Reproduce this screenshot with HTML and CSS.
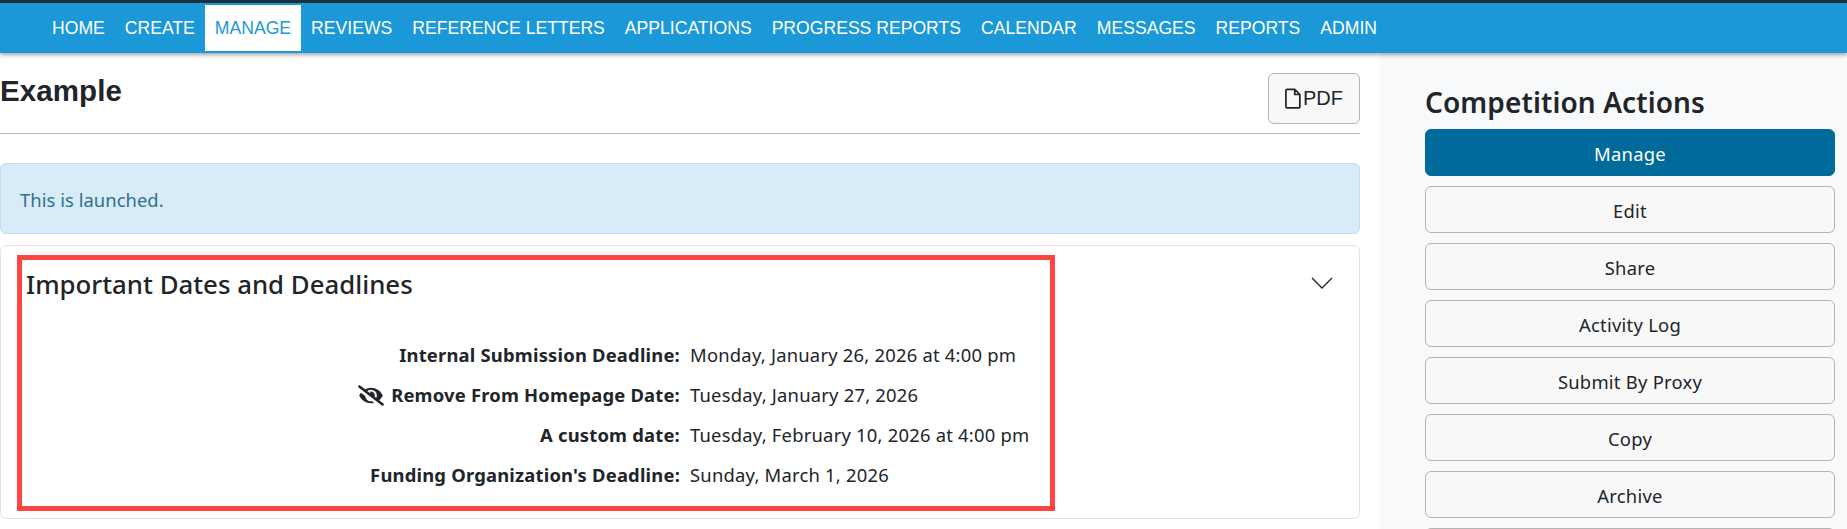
FILE: index.html
```html
<!DOCTYPE html>
<html lang="en">
<head>
<meta charset="utf-8">
<title>Example</title>
<link rel="stylesheet" href="styles.css">
</head>
<body>
<nav class="topnav">
  <a class="navlink" href="#">HOME</a>
  <a class="navlink" href="#">CREATE</a>
  <a class="navlink active" href="#">MANAGE</a>
  <a class="navlink" href="#">REVIEWS</a>
  <a class="navlink" href="#">REFERENCE LETTERS</a>
  <a class="navlink" href="#">APPLICATIONS</a>
  <a class="navlink" href="#">PROGRESS REPORTS</a>
  <a class="navlink" href="#">CALENDAR</a>
  <a class="navlink" href="#">MESSAGES</a>
  <a class="navlink" href="#">REPORTS</a>
  <a class="navlink" href="#">ADMIN</a>
</nav>
<div class="layout">
  <main class="main">
    <header class="pagehead">
      <h1 class="pagetitle">Example</h1>
      <button class="pdfbtn" type="button">
        <svg class="fileicon" viewBox="0 0 14 18" width="16" height="21" aria-hidden="true"><path d="M1.8 1h6.7L13 5.5v10.7a1 1 0 0 1-1 1H1.8a1 1 0 0 1-1-1V2a1 1 0 0 1 1-1zM8.5 1v4.5H13" fill="none" stroke="#212529" stroke-width="1.5" stroke-linejoin="round"/></svg>
        <span>PDF</span>
      </button>
    </header>
    <div class="alert">This is launched.</div>
    <section class="card">
      <div class="highlight">
        <h2 class="cardtitle">Important Dates and Deadlines</h2>
        <dl class="dates">
          <dt>Internal Submission Deadline:</dt>
          <dd>Monday, January 26, 2026 at 4:00 pm</dd>
          <dt><svg class="eyeicon" viewBox="0 0 640 512" width="26" height="21" aria-hidden="true"><path fill="#212529" d="M320 400c-75.85 0-137.25-58.71-142.9-133.11L72.2 185.82c-13.79 17.3-26.48 35.59-36.72 55.59a32.35 32.35 0 0 0 0 29.19C89.71 376.41 197.07 448 320 448c26.91 0 52.87-4 77.89-10.46L346 397.39a144.13 144.13 0 0 1-26 2.61zm313.82 58.1l-110.55-85.44a331.25 331.25 0 0 0 81.25-102.07 32.35 32.35 0 0 0 0-29.19C550.29 135.59 442.93 64 320 64a308.15 308.15 0 0 0-147.32 37.7L45.46 3.37A16 16 0 0 0 23 6.18L3.37 31.45A16 16 0 0 0 6.18 53.9l588.36 454.73a16 16 0 0 0 22.46-2.81l19.64-25.27a16 16 0 0 0-2.82-22.45zm-183.72-142l-39.3-30.38A94.75 94.75 0 0 0 416 256a94.76 94.76 0 0 0-121.31-92.21A47.65 47.65 0 0 1 304 192a46.64 46.64 0 0 1-1.54 10l-73.61-56.89A142.31 142.31 0 0 1 320 112a143.92 143.92 0 0 1 144 144c0 21.63-5.29 41.79-13.9 60.11z"/></svg> Remove From Homepage Date:</dt>
          <dd>Tuesday, January 27, 2026</dd>
          <dt>A custom date:</dt>
          <dd>Tuesday, February 10, 2026 at 4:00 pm</dd>
          <dt>Funding Organization's Deadline:</dt>
          <dd>Sunday, March 1, 2026</dd>
        </dl>
      </div>
      <svg class="chevron" viewBox="0 0 22 14" width="22" height="14" aria-hidden="true"><path d="M1 2l10 10L21 2" fill="none" stroke="#212529" stroke-width="1.4"/></svg>
    </section>
  </main>
  <aside class="sidebar">
    <h2 class="sidetitle">Competition Actions</h2>
    <div class="actions">
      <a class="action primary" href="#">Manage</a>
      <a class="action" href="#">Edit</a>
      <a class="action" href="#">Share</a>
      <a class="action" href="#">Activity Log</a>
      <a class="action" href="#">Submit By Proxy</a>
      <a class="action" href="#">Copy</a>
      <a class="action" href="#">Archive</a>
      <a class="action" href="#" aria-hidden="true"></a>
    </div>
  </aside>
</div>
</body>
</html>
```
FILE: styles.css
```css
* { box-sizing: border-box; }
html, body { margin: 0; height: 529px; overflow: hidden; background: #fff; }
body { font-family: "Noto Sans", "Open Sans", sans-serif; color: #212529; font-size: 18.4px; }

.topnav {
  height: 53px;
  border-top: 3px solid #1b2f3f;
  background: #1b98d7;
  padding: 2px 0 2px 42px;
  display: flex;
  box-shadow: 0 2px 4px rgba(0,0,0,.35);
  position: relative;
  font-family: "Liberation Sans", Arial, sans-serif;
  font-size: 17.6px;
}
.navlink { color: #fff; text-decoration: none; padding: 0 10px; display: flex; align-items: center; }
.navlink.active { background: #fff; color: #1b98d7; }

.layout { display: flex; height: 476px; }
.main { width: 1380px; padding: 0 20px 0 0; }
.pagehead { height: 81px; padding-top: 20px; border-bottom: 1px solid #bbb; display: flex; justify-content: space-between; align-items: flex-start; }
.pagetitle { margin: 0; font-family: "Liberation Sans", Arial, sans-serif; font-size: 29.5px; font-weight: 700; line-height: 36px; letter-spacing: .1px; }
.pdfbtn { width: 92px; height: 51px; background: #f8f8f8; border: 1px solid #b4b4b4; border-radius: 6px; display: flex; align-items: center; justify-content: center; gap: 2px; font-family: "Liberation Sans", Arial, sans-serif; font-size: 20px; color: #212529; padding: 0; }

.alert { margin-top: 29px; height: 71px; background: #d7ecf6; border: 1px solid #bcdff1; border-radius: 6px; padding: 1px 19px 0; display: flex; align-items: center; color: #31708f; letter-spacing: .05px; }

.card { margin-top: 11px; height: 274px; border: 1px solid #e3e3e3; border-radius: 6px; padding: 9px 0 0 16px; display: flex; align-items: flex-start; justify-content: space-between; }
.highlight { width: 1038px; height: 256px; border: 5px solid #ff4444; padding: 0 0 0 4px; }
.cardtitle { margin: 0; padding-top: 6px; font-size: 25.8px; font-weight: 500; line-height: 36px; }
.dates { margin: 32px 0 0; display: grid; grid-template-columns: 654px 1fr; column-gap: 10px; grid-auto-rows: 40px; align-items: center; }
.dates dt { font-weight: 700; text-align: right; letter-spacing: .2px; }
.dates dd { margin: 0; letter-spacing: .22px; }
.eyeicon { vertical-align: -4px; margin-right: 2px; }
.chevron { margin: 21px 26px 0 0; }

.sidebar { flex: 1; background: #f8f9fa; padding: 26px 12px 0 45px; }
.sidetitle { margin: 0 0 3px; font-size: 28px; font-weight: 600; line-height: 47px; letter-spacing: .1px; }
.actions { display: flex; flex-direction: column; gap: 10px; }
.action { height: 47px; border: 1px solid #b4b4b4; border-radius: 6px; color: #212529; text-decoration: none; display: flex; align-items: center; justify-content: center; letter-spacing: .25px; background: #f8f8f8; flex: none; padding-top: 2px; }
.action.primary { background: #006b9b; border-color: #006b9b; color: #fff; }
```
